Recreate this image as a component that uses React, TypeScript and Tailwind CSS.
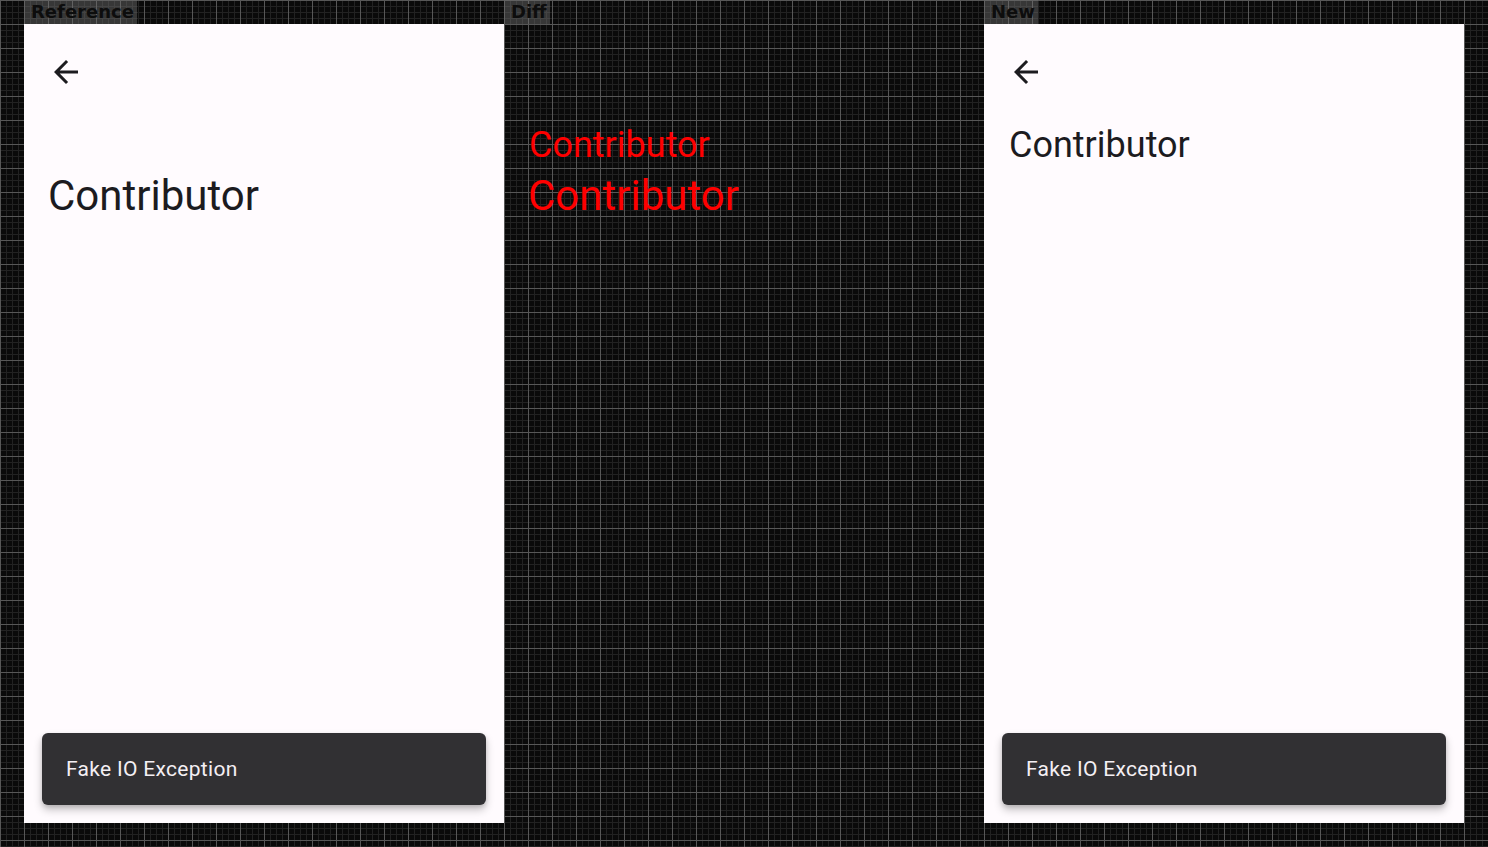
import React from "react";

const grid =
  "bg-[#0a0a0a] bg-[image:linear-gradient(to_right,#575757_1px,transparent_1px),linear-gradient(to_bottom,#575757_1px,transparent_1px),linear-gradient(to_right,#222222_1px,transparent_1px),linear-gradient(to_bottom,#222222_1px,transparent_1px)] bg-size-[24px_24px,24px_24px,6px_6px,6px_6px]";

function Label({ text }: { text: string }) {
  return (
    <div className="flex h-[24px]">
      <div className="flex items-center h-[24px] pl-[7px] pr-[3px] bg-[rgba(110,110,110,0.45)] text-[18px] font-bold text-[#0d0d0d] leading-none font-['DejaVu_Sans',sans-serif]">
        {text}
      </div>
    </div>
  );
}

function BackArrow() {
  return (
    <svg width="36" height="36" viewBox="0 0 24 24" fill="#1c1b1f">
      <path d="M20 11H7.83l5.59-5.59L12 4l-8 8 8 8 1.41-1.41L7.83 13H20v-2z" />
    </svg>
  );
}

function Snackbar() {
  return (
    <div className="mt-auto mx-[18px] mb-[18px] h-[72px] rounded-[6px] bg-[#313033] flex items-center pl-[24px] pt-[1px] shadow-[0_5px_8px_rgba(0,0,0,0.22),0_2px_4px_rgba(0,0,0,0.12)]">
      <span className="text-[21px] tracking-[0.3px] text-[#f4eff4] font-['Roboto',sans-serif]">
        Fake IO Exception
      </span>
    </div>
  );
}

export default function App() {
  return (
    <div className={`w-[1488px] h-[847px] ${grid} flex pl-[24px] font-['Roboto',sans-serif]`}>
      {/* Reference */}
      <div className="w-[480px] flex flex-col">
        <Label text="Reference" />
        <div className="h-[799px] bg-[#fffbfe] flex flex-col">
          <div className="pt-[30px] pl-[24px]">
            <BackArrow />
          </div>
          <div className="mt-[81px] pl-[24px] text-[42px] leading-[50px] text-[#1c1b1f]">
            Contributor
          </div>
          <Snackbar />
        </div>
      </div>
      {/* Diff */}
      <div className="w-[480px] flex flex-col">
        <Label text="Diff" />
        <div className="h-[799px] flex flex-col">
          <div className="h-[66px]" />
          <div className="mt-[33px] pl-[25px] text-[36px] leading-[44px] text-[#ff0000]">
            Contributor
          </div>
          <div className="mt-[4px] pl-[24px] text-[42px] leading-[50px] text-[#ff0000]">
            Contributor
          </div>
        </div>
      </div>
      {/* New */}
      <div className="w-[480px] flex flex-col">
        <Label text="New" />
        <div className="h-[799px] bg-[#fffbfe] flex flex-col">
          <div className="pt-[30px] pl-[24px]">
            <BackArrow />
          </div>
          <div className="mt-[33px] pl-[25px] text-[36px] leading-[44px] text-[#1c1b1f]">
            Contributor
          </div>
          <Snackbar />
        </div>
      </div>
    </div>
  );
}
